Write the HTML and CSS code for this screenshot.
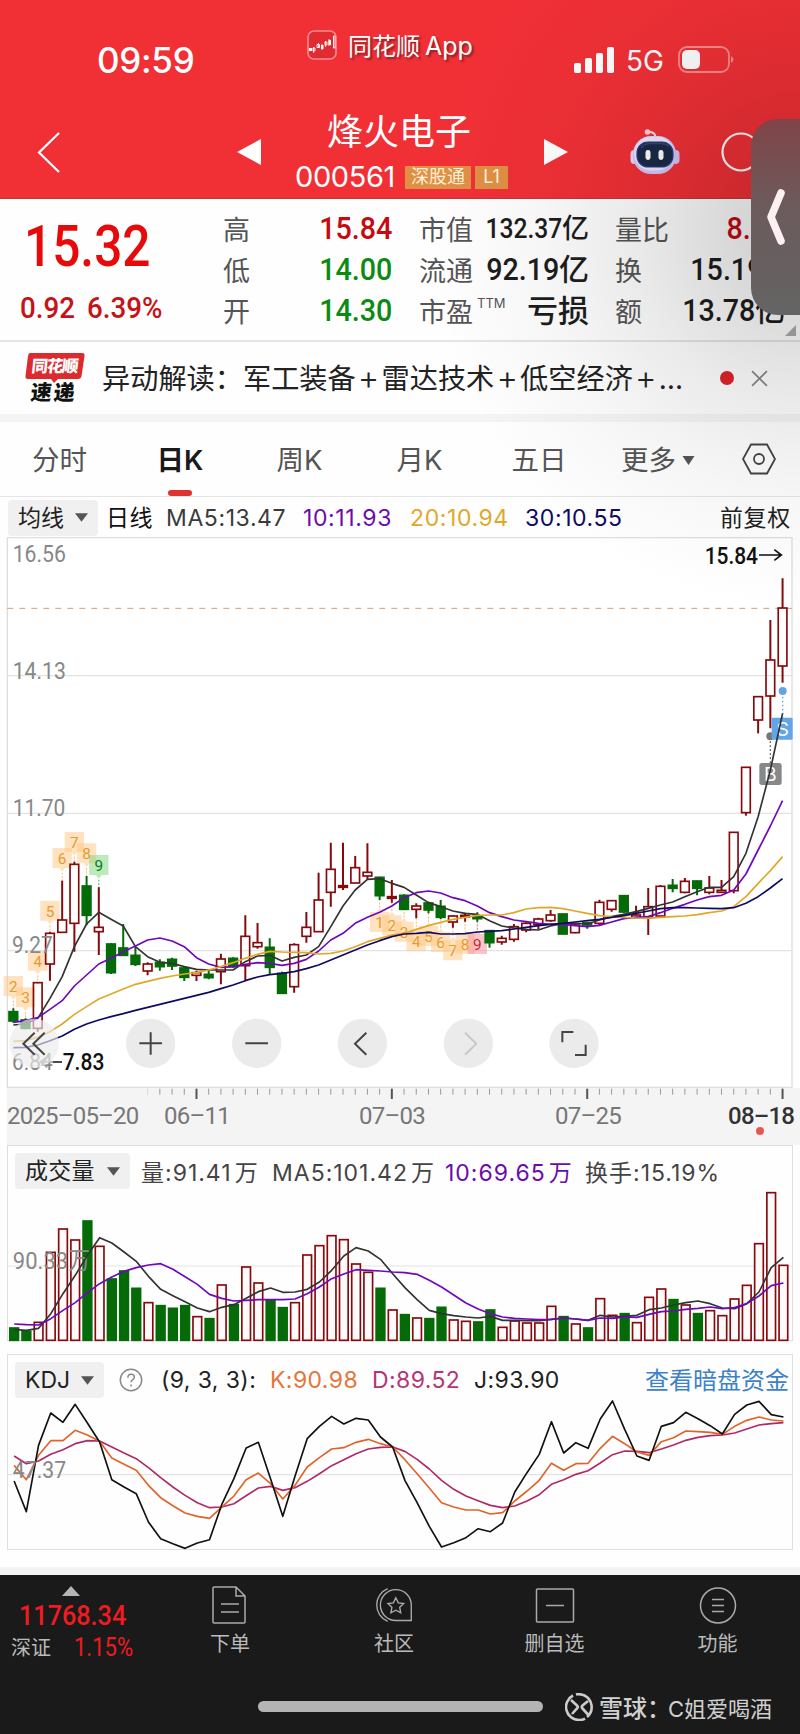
FILE: index.html
```html
<!DOCTYPE html>
<html lang="zh-CN">
<head>
<meta charset="utf-8">
<title>烽火电子 000561</title>
<link rel="stylesheet" href="styles.css">
</head>
<body>
<div class="screen">
  <header class="header">
    <div class="status">
      <span class="clock">09:59</span>
      <svg class="app-icon" viewBox="0 0 30 30"><rect x="1" y="1" width="28" height="28" rx="6" fill="#df2b31" stroke="#ff8b8d" stroke-width="1.6"/><path d="M6.500 17v6M11.500 13v5M15 14v6M18.500 11v6M22 9v7" stroke="#fff" stroke-width=".8"/><path d="M2 18h3v3h-3zM14 15h2.500v4h-2.500zM21.500 10h2.500v5h-2.500z" fill="#fff"/><path d="M6 18h2v3h-2zM10 14.500h2.500v3H10zM18 12h2v3h-2zM26.500 6h1.500v12h-1.500z" fill="none" stroke="#fff" stroke-width=".9"/></svg>
      <span class="app-name">同花顺<span>App</span></span>
      <svg class="signal" viewBox="0 0 42 26"><g fill="#fff"><rect x="1" y="16" width="7" height="10" rx="1.800"/><rect x="12" y="11" width="7" height="15" rx="1.800"/><rect x="23" y="6" width="7" height="20" rx="1.800"/><rect x="34" y="0" width="7" height="26" rx="1.800"/></g></svg>
      <span class="net">5G</span>
      <svg class="battery" viewBox="0 0 57 28"><rect x="1" y="1" width="50" height="25" rx="8" fill="none" stroke="#fb8b8d" stroke-width="1.800"/><rect x="4" y="4" width="18" height="19" rx="5" fill="#fff"/><path d="M53 10q5 3.500 0 7z" fill="#fb8b8d"/></svg>
    </div>
    <div class="titlebar">
      <svg class="back" viewBox="0 0 24 42"><path d="M22 1L2 20.500 22 40" fill="none" stroke="#fff" stroke-width="2.200"/></svg>
      <svg class="tri-prev" viewBox="0 0 24 26"><path d="M0 13L24 0v26z" fill="#fff"/></svg>
      <div class="title">
        <h1>烽火电子</h1>
        <div class="code-row"><span class="code">000561</span><span class="tag">深股通</span><span class="tag tag-l1">L1</span></div>
      </div>
      <svg class="tri-next" viewBox="0 0 24 26"><path d="M24 13L0 0v26z" fill="#fff"/></svg>
      <svg class="robot" viewBox="0 0 50 48"><path d="M18 4q7-.5 7.500 5" fill="none" stroke="#f3dff0" stroke-width="2"/><circle cx="17.500" cy="4" r="2.800" fill="#ffd3d8"/><rect x="0.500" y="22" width="8" height="14" rx="4" fill="#e6dcff"/><rect x="41.500" y="22" width="8" height="14" rx="4" fill="#d0c5f8"/><rect x="3" y="8" width="43" height="38" rx="18" fill="#d3c8f5"/><rect x="4" y="8.500" width="40" height="34" rx="17" fill="#efe8ff"/><rect x="7" y="14" width="36" height="25" rx="11" fill="#1a2a48" stroke="#2c3d8a" stroke-width="1.200"/><path d="M11 20q3-4 8-4.500h12q5 0 8 3" fill="none" stroke="#3a4668" stroke-width="1.500"/><rect x="15.500" y="22" width="5" height="10" rx="2.400" fill="#fff"/><rect x="28.500" y="22" width="5" height="10" rx="2.400" fill="#fff"/></svg>
      <svg class="search" viewBox="0 0 50 50"><circle cx="20" cy="20" r="18.500" fill="none" stroke="#fff" stroke-width="2.200"/><path d="M34 34l11 11" stroke="#fff" stroke-width="2.200"/></svg>
    </div>
  </header>

  <section class="quote">
    <div class="price">
      <div class="last num">15.32</div>
      <div class="change"><span class="num">0.92</span><span class="num">6.39%</span></div>
    </div>
    <div class="stats">
      <span>高</span><b class="up"><i class="num">15.84</i></b><span>市值</span><b class="small"><i class="num">132.37</i>亿</b><span>量比</span><b class="up ratio"><i class="num">8.</i></b>
      <span>低</span><b class="down"><i class="num">14.00</i></b><span>流通</span><b><i class="num">92.19</i>亿</b><span>换</span><b><i class="num">15.19%</i></b>
      <span>开</span><b class="down"><i class="num">14.30</i></b><span>市盈<sup>TTM</sup></span><b class="loss">亏损</b><span>额</span><b><i class="num">13.78</i>亿</b>
    </div>
    <svg class="corner" viewBox="0 0 10 10"><path d="M10 0v10H0z" fill="#aaa"/></svg>
  </section>

  <section class="news">
    <svg class="news-logo" viewBox="0 0 60 52"><path d="M5 1h52q3 0 2.500 3l-3 20q-.5 3-3.500 3H33l-4 4-3-4H3q-3 0-2.500-3L3 4q.5-3 2-3z" fill="#dc2a2e"/><g class="logo-text"><text x="6" y="20" textLength="47" fill="#fff" font-size="16.500" transform="skewX(-6) translate(2 0)">同花顺</text><text x="5" y="48.500" textLength="44" fill="#111" font-size="21" transform="skewX(-6) translate(5 0)">速递</text></g></svg>
    <p>异动解读：军工装备<i>+</i>雷达技术<i>+</i>低空经济<i>+</i>…</p>
    <span class="dot"></span>
    <svg class="close" viewBox="0 0 16 16"><path d="M1 1l14 14M15 1L1 15" stroke="#888" stroke-width="1.700"/></svg>
  </section>

  <nav class="tabs">
    <span>分时</span><span class="active">日K</span><span>周K</span><span>月K</span><span>五日</span><span>更多<svg class="more" viewBox="0 0 12 9"><path d="M0 0h12L6 9z" fill="#555"/></svg></span>
    <svg class="hex" viewBox="0 0 34 32"><path d="M9 1.500h16L33 16l-8 14.500H9L1 16z" fill="none" stroke="#444" stroke-width="1.800"/><circle cx="17" cy="16" r="5" fill="none" stroke="#444" stroke-width="1.800"/></svg>
  </nav>

  <div class="ma-row">
    <span class="select">均线<svg viewBox="0 0 14 9"><path d="M0 0h14L7 9z"/></svg></span>
    <span class="day">日线</span><span class="ma5">MA5:13.47</span><span class="purple">10:11.93</span><span class="gold">20:10.94</span><span class="navy">30:10.55</span><span class="adj">前复权</span>
  </div>

  <svg class="main-chart" id="kline" viewBox="0 -786 2400 1650">
    <path d="M22 -787V862H2376V-787z" fill="#fff" fill-opacity=".5" stroke="#dedede" stroke-width="4"/>
    <path d="M22 -373H2376M22 40H2376M22 452H2376" stroke="#e3e3e3" stroke-width="3.500"/>
    <path d="M22 -575H2376" stroke="#cf9f78" stroke-width="3" stroke-dasharray="18 18"/>
    <g class="axis-text">
      <text x="38" y="-715" textLength="160" lengthAdjust="spacingAndGlyphs">16.56</text><text x="38" y="-364" textLength="160" lengthAdjust="spacingAndGlyphs">14.13</text>
      <text x="38" y="48" textLength="158" lengthAdjust="spacingAndGlyphs">11.70</text>
    </g>
    <g class="plot"></g>
    <g class="axis-text"><text x="36" y="459" textLength="122" lengthAdjust="spacingAndGlyphs">9.27</text><text x="36" y="810" textLength="122" lengthAdjust="spacingAndGlyphs">6.84</text></g>
    <g class="marker-text"><text x="2114" y="-709" textLength="160" lengthAdjust="spacingAndGlyphs">15.84</text><text x="188" y="810" textLength="125" lengthAdjust="spacingAndGlyphs">7.83</text></g>
    <path d="M2277 -735h66m-20 -16l21 16-21 16M186 786h-28" fill="none" stroke="#111" stroke-width="5"/>
    <path d="M158 786h-36m20 -16l-21 16 21 16" fill="none" stroke="#999" stroke-width="5"/>
    <circle cx="2348" cy="-327" r="12" fill="#64a4e6"/><path d="M2348 -310v65" stroke="#64a4e6" stroke-width="4" stroke-dasharray="5 7"/>
    <circle cx="2311" cy="-191" r="12" fill="#777"/><path d="M2311 -176v65" stroke="#666" stroke-width="4" stroke-dasharray="5 7"/>
    <g class="trade-badge"><rect x="2315" y="-247" width="63" height="66" rx="4" fill="#62a5e8"/><text x="2348" y="-192">S</text><rect x="2278" y="-111" width="67" height="66" rx="8" fill="#7b7b7b" fill-opacity=".9"/><text x="2311" y="-56">B</text></g>
    <g class="averages"></g>
    <g class="tools">
      <circle cx="102" cy="730" r="74" fill-opacity=".65"/><circle cx="452" cy="730" r="74"/><circle cx="770" cy="730" r="74"/><circle cx="1087" cy="730" r="74"/><circle cx="1405" cy="730" r="74"/><circle cx="1722" cy="730" r="74"/>
      <path d="M104 698L70 731l34 33M134 698l-34 33 34 33M452 697v67M418 730h68M736 730h68M1099 698l-34 33 34 33M1687 727v-31h33M1725 765h32v-31"/><path class="off" d="M1395 698l34 33-34 33"/>
    </g>
  </svg>

  <div class="axis">
    <svg id="ticks" viewBox="0 862 2400 48"></svg>
    <div class="dates"><span class="d0">2025–05–20</span><span class="d1">06–11</span><span class="d2">07–03</span><span class="d3">07–25</span><span class="d4">08–18<i></i></span></div>
  </div>

  <section class="panel volume">
    <div class="panel-head">
      <span class="select">成交量<svg viewBox="0 0 14 9"><path d="M0 0h14L7 9z"/></svg></span>
      <span class="v1">量:91.41<em>万</em></span><span class="v2">MA5:101.42<em>万</em></span><span class="v3 purple">10:69.65<em>万</em></span><span class="v4">换手:15.19%</span>
    </div>
    <svg id="volume" viewBox="22 182 2354 423">
      <path d="M22 377H2376" stroke="#e3e3e3" stroke-width="3.500"/><g class="plot"></g>
      <g class="axis-text"><text x="36" y="387" textLength="232" lengthAdjust="spacingAndGlyphs">90.33万</text></g>
      <g class="averages"></g>
    </svg>
  </section>

  <section class="panel kdj">
    <div class="panel-head">
      <span class="select">KDJ<svg viewBox="0 0 14 9"><path d="M0 0h14L7 9z"/></svg></span>
      <svg class="help" viewBox="0 0 26 26"><circle cx="13" cy="13" r="11.600" fill="none" stroke="#888" stroke-width="1.600"/><path d="M9.600 10.500q0-3.800 3.500-3.800t3.500 3.200q0 1.700-2 2.900-1.500 1-1.500 2.700M13.100 18v2" fill="none" stroke="#888" stroke-width="1.600"/></svg>
      <span class="k1">(9, 3, 3):</span><span class="k2">K:90.98</span><span class="k3">D:89.52</span><span class="k4">J:93.90</span><span class="k5">查看暗盘资金</span>
    </div>
    <svg id="kdj" viewBox="22 146 2354 452">
      <path d="M22 373H2376" stroke="#e3e3e3" stroke-width="3.500"/>
      <g class="averages"></g>
      <g class="axis-text"><text x="36" y="382" textLength="160" lengthAdjust="spacingAndGlyphs">47.37</text></g>
    </svg>
  </section>

  <footer class="footer">
    <div class="nav">
      <div class="index"><svg viewBox="0 0 18 10"><path d="M9 0l9 10H0z" fill="#b5b5b5"/></svg><strong class="num">11768.34</strong><div><span>深证</span><span class="num pct">1.15%</span></div></div>
      <div class="item n1"><svg viewBox="0 0 40 40"><path d="M4 2h22l9 9v26q0 1-1 1H4q-1 0-1-1V3q0-1 1-1zM26 2v9h9M11 19h18M11 27h18"/></svg><span>下单</span></div>
      <div class="item n2"><svg viewBox="0 0 44 40"><path d="M15 2A19.500 19.500 0 0 0 15 38M25 37h16V20A17 17 0 1 0 25 37zM24 12l2.700 5.600 6 .8-4.400 4.200 1.100 6-5.400-2.900-5.400 2.900 1.100-6-4.400-4.200 6-.8z"/></svg><span>社区</span></div>
      <div class="item n3"><svg viewBox="0 0 40 40"><rect x="1.500" y="4" width="37" height="33" rx="1"/><path d="M11 20.500h18"/></svg><span>删自选</span></div>
      <div class="item n4"><svg viewBox="0 0 40 40"><circle cx="20" cy="20.500" r="17.500"/><path d="M14 14.500h12M14 20.500h12M14 26.500h12"/></svg><span>功能</span></div>
    </div>
    <div class="bottom"><span class="home"></span>
      <span class="watermark"><svg viewBox="0 0 28 28"><path d="M8 2.500A13 13 0 0 0 14 27q4 0 6-1.500M11 1.500Q14 .5 19 2.200A13 13 0 0 1 22 24M6 7l6 5.500q1.500 1.500 0 3L7 21M23 8l-5.500 4.500q-1.500 1.500 0 3l5.500 6"/></svg><b>雪球：</b>C姐爱喝酒</span>
    </div>
  </footer>

  <div class="shade"></div>
  <div class="drawer"><svg viewBox="0 0 18 56"><path d="M14 4L4 28l10 24" fill="none" stroke="#fff0f4" stroke-width="7.500" stroke-linecap="round" stroke-linejoin="round"/></svg></div>
</div>
<script src="chart.js"></script>
</body>
</html>
```
FILE: styles.css
```css
* { box-sizing: border-box; }
body { margin: 0; background: #fff; font-family: Inter, "Noto Sans CJK SC", sans-serif; color: #222; }
h1, p { margin: 0; font-weight: 400; }
i, em { font-style: normal; }
svg { display: block; flex: none; }
span, b, strong, h1, p { white-space: nowrap; }
.screen { position: relative; width: 800px; height: 1734px; overflow: hidden; display: flex; flex-direction: column; background: #fefefe; }
.num { display: inline-block; font-family: Roboto, sans-serif; font-weight: 500; transform: scaleX(.9); transform-origin: 0 50%; }

.header { height: 199px; background: #f13036; color: #fff; border-bottom: 1px solid #b83a3c; }
.status { display: grid; grid-template-columns: 210px 42px 224px 53px 52px 60px; padding: 30px 0 0 97px; height: 100px; align-items: start; }
.clock { font-size: 35px; font-weight: 500; line-height: 60px; letter-spacing: -.3px; }
.app-icon { width: 30px; height: 30px; }
.app-name { font-size: 24px; line-height: 33px; text-shadow: 2px 2px 2px #8a2225; margin-left: -1px; }
.app-name span { margin-left: 5px; font-size: 25px; }
.signal { width: 42px; height: 26px; margin-top: 17px; }
.net { font-size: 28px; line-height: 62px; }
.battery { width: 57px; height: 28px; margin-top: 16px; }
.titlebar { display: grid; grid-template-columns: 200px 58px 249px 86px 91px 50px; padding-left: 37px; height: 98px; align-items: start; }
.back { width: 24px; height: 42px; margin-top: 32px; }
.tri-prev, .tri-next { width: 24px; height: 26px; margin-top: 39px; }
.titlebar h1 { font-size: 36px; line-height: 44px; padding: 10px 0 0 32px; }
.code-row { display: flex; align-items: center; height: 24px; margin-top: 11px; }
.code { width: 110px; font-size: 29px; line-height: 24px; letter-spacing: -.4px; }
.tag { width: 66px; height: 23px; margin-right: 4px; background: #df9044; color: #fff0dc; font-size: 18px; line-height: 22px; text-align: center; }
.tag-l1 { width: 33px; }
.robot { width: 50px; height: 48px; margin-top: 28px; }
.search { width: 50px; height: 50px; margin-top: 32px; }

.quote { height: 143px; position: relative; display: flex; border-bottom: 2px solid #e4e4e4; }
.price { width: 223px; color: #e60a0a; }
.last { font-size: 57px; line-height: 60px; margin: 18px 0 0 24px; transform: scaleX(.87); }
.change { display: flex; padding-left: 20px; margin-top: 16px; font-size: 29.500px; line-height: 30px; color: #c71216; }
.change span { width: 67px; transform: scaleX(.94); }
.stats { display: grid; grid-template-columns: 60px 109px 60px 137px 67px 129px; grid-auto-rows: 41px; padding-top: 9px; align-items: center; }
.stats > span { font-size: 27px; color: #555; }
.stats > b { font-size: 30px; font-weight: 500; justify-self: end; color: #1d1d1d; height: 41px; line-height: 41px; }
.stats > :nth-child(6n+3) { margin-left: 27px; }
.stats > :nth-child(6n+5) { margin-left: 26px; }
.stats .num { transform-origin: 100% 50%; font-size: 31.500px; transform: scaleX(.91); }
.stats .small { font-size: 27px; }
.stats .small .num { font-size: 28px; transform: scaleX(.88); }
.stats .up { color: #c40b10; }
.stats .down { color: #0b8b13; }
.stats .ratio { padding-right: 34px; }
.stats .loss { font-size: 31px; }
.stats sup { font-size: 13px; vertical-align: 14px; margin-left: 4px; line-height: 0; }
.corner { position: absolute; right: 4px; bottom: 4px; width: 11px; height: 11px; }

.news { height: 80px; display: grid; grid-template-columns: 79px 617px 31px 18px; padding-left: 24px; align-items: center; border-bottom: 8px solid #f4f4f4; }
.news-logo { width: 60px; height: 52px; margin-left: 1px; overflow: visible; }
.logo-text { font-family: "Noto Sans CJK SC", sans-serif; font-weight: 900; }
.news p { font-size: 28.200px; color: #222; line-height: 40px; padding-top: 1px; margin-left: -1px; }
.news p i { display: inline-block; width: 25.800px; text-align: center; font-weight: 300; font-size: 33px; line-height: 20px; }
.dot { width: 14px; height: 14px; border-radius: 50%; background: #de2529; }
.close { width: 17px; height: 17px; }

.tabs { height: 75px; display: grid; grid-template-columns: 119px 122px 117px 123px 116px 122px 81px; border-bottom: 1px solid #e5e5e5; font-size: 27.500px; line-height: 76px; color: #555; text-align: center; }
.tabs .active { font-weight: 600; color: #1a1a1a; display: flex; flex-direction: column; align-items: center; height: 74px; }
.tabs .active::after { content: ""; width: 24px; height: 6px; margin-top: -8px; border-radius: 3px; background: #de3430; flex: none; }
.more { display: inline-block; width: 13px; height: 9px; margin: 0 0 5px 6px; }
.hex { width: 34px; height: 32px; margin: 21px 0 0 23px; }

.ma-row { height: 41px; padding-left: 8px; display: grid; grid-template-columns: 98px 60px 137px 107px 115px 195px 74px; align-items: center; font-size: 23px; color: #3b3b3b; letter-spacing: .6px; }
.select { display: flex; align-items: center; justify-content: space-between; width: 90px; height: 36px; padding: 0 10px; background: #f0f0f0; border-radius: 4px; color: #222; font-size: 23px; line-height: 34px; letter-spacing: 0; }
.select svg { width: 13px; height: 9px; fill: #555; }
.day { color: #111; } .adj { color: #222; }
.day, .adj { padding-bottom: 3px; }
.purple { color: #6b0caa; } .gold { color: #e0a82a; } .navy { color: #100a62; }

.main-chart { width: 800px; height: 550px; overflow: visible; }
.axis-text { font: 400 71px Roboto, "Noto Sans CJK SC", sans-serif; fill: #888; }
.marker-text { font: 500 69px Roboto, sans-serif; fill: #111; }
.trade-badge { font: 58px Inter, sans-serif; fill: #fff; text-anchor: middle; }
.tools circle { fill: #ebebeb; }
.tools path { fill: none; stroke: #444; stroke-width: 6; }
.tools .off { stroke: #c8c8c8; }
.td { font: 46px Roboto, sans-serif; text-anchor: middle; }

.axis { height: 57px; margin-left: 7px; background: #f4f4f4; }
#ticks { width: 800px; height: 16px; margin-left: -7px; }
.dates { display: grid; grid-template-columns: 157px 195px 196px 173px 70px; font: 400 24px/24px Roboto, sans-serif; color: #777; letter-spacing: -.75px; }
.dates .d0 { letter-spacing: -.8px; }
.d4 { color: #333; font-weight: 500; position: relative; }
.d4 i { position: absolute; left: 28px; top: 23px; width: 8px; height: 8px; border-radius: 50%; background: #e95555; }

.panel { width: 786px; margin-left: 7px; border: 1.500px solid #dedede; }
.panel > svg { width: 785px; overflow: visible; }
.panel-head { display: grid; align-items: center; padding: 6px 0 0 7px; font-size: 23px; color: #444; letter-spacing: .4px; }
.volume { height: 196px; }
.volume .panel-head { grid-template-columns: 126px 131px 173px 140px 150px; height: 55px; padding: 0 0 5px 7px; letter-spacing: 1px; }
.volume .select { width: 115px; letter-spacing: .3px; }
.panel em { margin-left: 3px; }
#volume { height: 141px; }
.kdj { margin-top: 13px; height: 196px; }
.kdj .panel-head { grid-template-columns: 104px 42px 109px 102px 102px 171px 142px; height: 44px; }
.kdj .select { width: 89px; }
#kdj { height: 150.700px; }
.help { width: 24px; height: 24px; }
.k1, .k4 { color: #222; } .k2 { color: #e57538; } .k3 { color: #b33576; } .k5 { color: #3d82c8; font-size: 24px; letter-spacing: 0; padding-bottom: 3px; }

.footer { margin-top: 17px; height: 167px; border-top: 8px solid #f4f4f4; background: #1a1a1a; color: #bbb; }
.nav { display: grid; grid-template-columns: 168px 124px 204px 121px 183px; height: 114px; }
.index { padding: 11px 0 0 11px; font-size: 20px; }
.index > svg { width: 18px; height: 10px; margin-left: 51px; }
.index strong { display: block; margin: 3px 0 0 8px; font-size: 28px; line-height: 34px; color: #ef1b20; font-weight: 500; transform: scaleX(.9); }
.index div { display: flex; line-height: 30px; }
.index .pct { margin-left: 23px; color: #ef1b20; font-size: 25px; font-weight: 400; transform: scaleX(.88); }
.item { display: flex; flex-direction: column; align-items: center; padding-top: 10px; font-size: 20px; line-height: 30px; }
.n3 { padding-right: 4px; }
.n4 { padding-left: 18px; }
.item svg { width: 40px; height: 40px; fill: none; stroke: #aaa; stroke-width: 1.500; margin-bottom: 4px; }
.bottom { display: grid; grid-template-columns: 285px 22px 220px; padding-left: 258px; align-items: center; height: 32px; }
.home { height: 11px; border-radius: 6px; background: #b4b4b4; }
.watermark { grid-column: 3; display: flex; align-items: center; color: #d0d0d0; font-size: 22px; }
.watermark svg { width: 28px; height: 28px; margin-right: 6px; fill: none; stroke: #ccc; stroke-width: 2.600; }
.watermark b { width: 69px; font-size: 24px; font-weight: 500; }

.shade { position: absolute; right: 0; top: 0; width: 420px; height: 640px; pointer-events: none; background: radial-gradient(ellipse 370px 380px at 100% 36%, rgba(0,0,0,.2), rgba(0,0,0,.08) 45%, rgba(0,0,0,.03) 70%, transparent); }
.drawer { position: absolute; left: 751px; top: 119px; width: 70px; height: 196px; border-radius: 27px 0 0 27px; background: linear-gradient(#804448, #6c5b5c 45%, #646464); }
.drawer svg { width: 18px; height: 56px; margin: 70px 0 0 16px; }
```
FILE: chart.js
```js
const STEP = 36.63, X0 = 40;
const x = i => X0 + STEP * i;
const RED = '#860a0d', GREEN = '#056b08';

// direction, high, body top, body bottom, low
const candles = [
['g',625,635,663,668],['g',655,660,685,688],['r',548,548,685,695],['r',395,400,492,542],['r',242,360,397,397],['r',185,193,370,455],['g',228,258,346,375],['r',262,382,395,465],
['g',430,432,518,522],['g',372,444,466,466],['g',440,466,493,498],['r',487,492,513,526],['g',478,487,500,512],['g',473,478,498,510],['g',500,504,532,543],['r',512,518,526,543],
['g',510,523,533,538],['r',461,477,515,553],['g',472,475,500,503],['r',346,409,497,543],['r',369,428,440,446],['g',415,442,502,522],['g',515,520,580,580],['r',430,434,560,578],
['r',336,382,409,428],['r',218,300,395,395],['r',128,208,277,320],['r',128,257,262,270],['r',168,203,249,249],['r',130,217,228,237],['g',230,232,287,300],['r',240,290,295,308],
['g',283,286,328,330],['r',310,318,328,355],['g',305,309,330,340],['g',300,319,352,357],['r',345,348,366,383],['r',338,346,351,365],['g',337,349,356,365],['g',392,392,428,443],
['r',407,415,426,434],['r',372,380,418,425],['r',363,370,390,397],['r',353,357,374,387],['r',330,345,362,365],['g',341,342,402,402],['r',370,375,398,400],['g',365,368,375,386],
['r',299,307,370,375],['r',301,302,328,335],['g',287,287,336,340],['r',317,345,352,355],['r',264,320,350,405],['r',255,259,348,350],['g',237,256,265,277],['r',234,244,277,280],
['g',242,243,265,286],['r',228,264,277,283],['r',240,271,277,278],['r',97,97,272,280],['r',-98,-98,38,47],['r',-310,-310,-240,-200],['r',-540,-420,-312,-215],['r',-665,-576,-402,-352]];

const volumes = [562,572,545,335,265,298,241,317,415,391,443,486,495,503,495,528,534,433,492,379,427,480,501,486,343,315,285,297,370,395,443,508,522,532,534,500,538,542,544,508,560,541,547,547,497,528,550,562,474,524,519,546,470,445,477,493,519,510,525,475,434,309,156,374];

const lines = {
  kline: {
    '#333': [675,672,655,595,530,440,372,337,358,378,440,470,487,490,500,508,510,510,510,485,468,466,483,472,465,440,380,318,270,238,236,250,262,285,308,320,333,340,343,362,378,384,388,390,378,370,370,372,360,350,343,335,325,315,306,290,275,262,262,230,160,50,-90,-260],
    '#6f08bb': [667,662,653,628,602,558,525,492,475,455,438,420,414,423,440,473,492,502,500,493,488,490,496,490,478,453,420,400,370,352,337,318,293,278,273,279,293,302,318,338,350,360,365,370,373,373,377,380,376,366,356,352,350,338,325,313,300,290,286,270,222,150,78,2],
    '#e0a82a': [724,722,712,695,672,643,620,597,582,567,553,544,535,528,522,518,510,500,488,475,463,454,456,457,458,462,460,453,440,425,415,405,400,388,377,367,358,352,346,345,345,338,327,323,322,326,333,340,347,350,352,354,355,352,350,348,344,338,333,320,290,250,212,170],
    '#100b62': [743,742,735,722,708,688,672,660,650,641,631,622,613,604,595,586,577,566,555,542,531,524,520,515,506,495,480,465,450,435,422,410,402,400,397,402,402,401,396,394,392,387,382,377,373,370,366,362,358,352,347,340,333,326,323,323,324,325,326,323,310,290,264,236]
  },
  volume: {
    '#333': [568,570,564,520,460,405,345,292,308,335,363,408,447,466,484,503,514,501,493,474,454,443,456,455,447,425,390,347,322,332,357,400,442,478,510,520,526,530,533,528,540,540,541,541,537,533,536,540,525,530,528,525,508,503,494,487,482,490,503,505,490,455,382,351],
    '#6f08bb': [551,553,554,535,510,487,457,430,410,393,382,374,370,387,409,432,462,474,482,480,478,478,478,476,460,440,415,401,388,390,392,395,397,402,420,440,464,488,506,520,530,534,536,538,537,533,536,540,533,534,530,531,522,514,512,507,504,500,505,502,490,467,436,428]
  },
  kdj: {
    '#b02a68': [317,340,332,312,298,280,271,272,290,308,325,352,382,410,435,457,472,470,460,436,413,408,420,412,393,370,346,328,310,296,291,290,303,327,356,390,417,437,451,465,472,467,452,433,402,388,372,361,338,313,302,303,307,296,284,270,261,256,254,248,236,224,220,217],
    '#e0642a': [345,388,315,271,271,240,254,273,323,342,360,405,442,466,488,498,504,470,437,388,368,400,446,405,350,322,296,292,276,267,280,290,328,370,413,457,470,479,479,491,487,452,422,390,339,360,340,339,294,258,280,305,315,274,262,242,244,246,252,228,210,200,209,212],
    '#111': [392,484,285,188,216,162,218,275,388,410,430,515,565,580,594,578,568,463,385,293,276,385,498,378,265,228,198,221,204,209,260,290,390,457,528,590,577,562,535,544,518,425,367,312,214,308,277,294,206,152,237,317,330,228,217,186,205,226,251,192,164,153,193,200]
  }
};

// index, centre y, label; above or below the candle
const countsUp = [[0,560,2],[1,594,3],[2,484,4],[3,334,5],[4,176,6],[5,128,7],[6,162,8],[7,197,9]];
const countsDown = [[30,368,1],[31,378,2],[32,397,3],[33,426,4],[34,410,5],[35,428,6],[36,453,7],[37,433,8],[38,434,9]];

function tag([i, y, n], down) {
  const c = x(i), nine = n === 9;
  const fill = nine ? (down ? '#f58b95' : '#7bd67b') : '#ffc680';
  const ink = nine ? (down ? '#c32b34' : '#0a7a12') : '#e8992c';
  const tip = down ? `M${c - 9} ${y - 32}l9-11 9 11z` : `M${c - 9} ${y + 28}l9 11 9-11z`;
  const tail = down ? `M${c} ${y - 45}v-28` : `M${c} ${y + 42}v26`;
  return `<path d="M${c - 29} ${y - 32}h58v60h-58z${tip}" fill="${fill}" fill-opacity=".5"/><path d="${tail}" stroke="${ink}" stroke-width="2" stroke-dasharray="6 4"/><text class="td" x="${c}" y="${y + 16}" fill="${ink}">${n}</text>`;
}

let k = countsUp.map(t => tag(t, false)).join('') + countsDown.map(t => tag(t, true)).join('');
let v = '';
candles.forEach(([d, h, t, b, l], i) => {
  const c = x(i), tall = Math.max(b - t, 5);
  const up = d === 'r', col = up ? RED : GREEN;
  k += `<path d="M${c} ${h}V${t}M${c} ${b}V${l}" stroke="${col}" stroke-width="6"/>`;
  k += `<rect x="${c - 13}" y="${t}" width="26" height="${tall}" fill="${up ? 'none' : col}" stroke="${col}" stroke-width="5"/>`;
  v += `<rect x="${c - 13}" y="${volumes[i] + 1}" width="26" height="${599 - volumes[i]}" fill="${up ? '#fffafa' : col}" stroke="${col}" stroke-width="5"/>`;
});
document.querySelector('#kline .plot').innerHTML = k;
document.querySelector('#volume .plot').innerHTML = v;

for (const id in lines) {
  document.querySelector(`#${id} .averages`).innerHTML = Object.entries(lines[id]).map(([col, ys]) =>
    `<polyline points="${ys.map((y, i) => x(i).toFixed(1) + ',' + y).join(' ')}" fill="none" stroke="${col}" stroke-width="5" stroke-linejoin="round"/>`).join('');
}

let ticks = '';
for (let i = 11; i < 64; i++) {
  const major = i % 16 === 15;
  ticks += `<path d="M${x(i)} 864v${major ? 31 : 18}" stroke="${major ? '#555' : '#999'}" stroke-width="${major ? 6 : 3}" opacity="${i === 11 ? .3 : 1}"/>`;
}
document.getElementById('ticks').innerHTML = ticks;
```
